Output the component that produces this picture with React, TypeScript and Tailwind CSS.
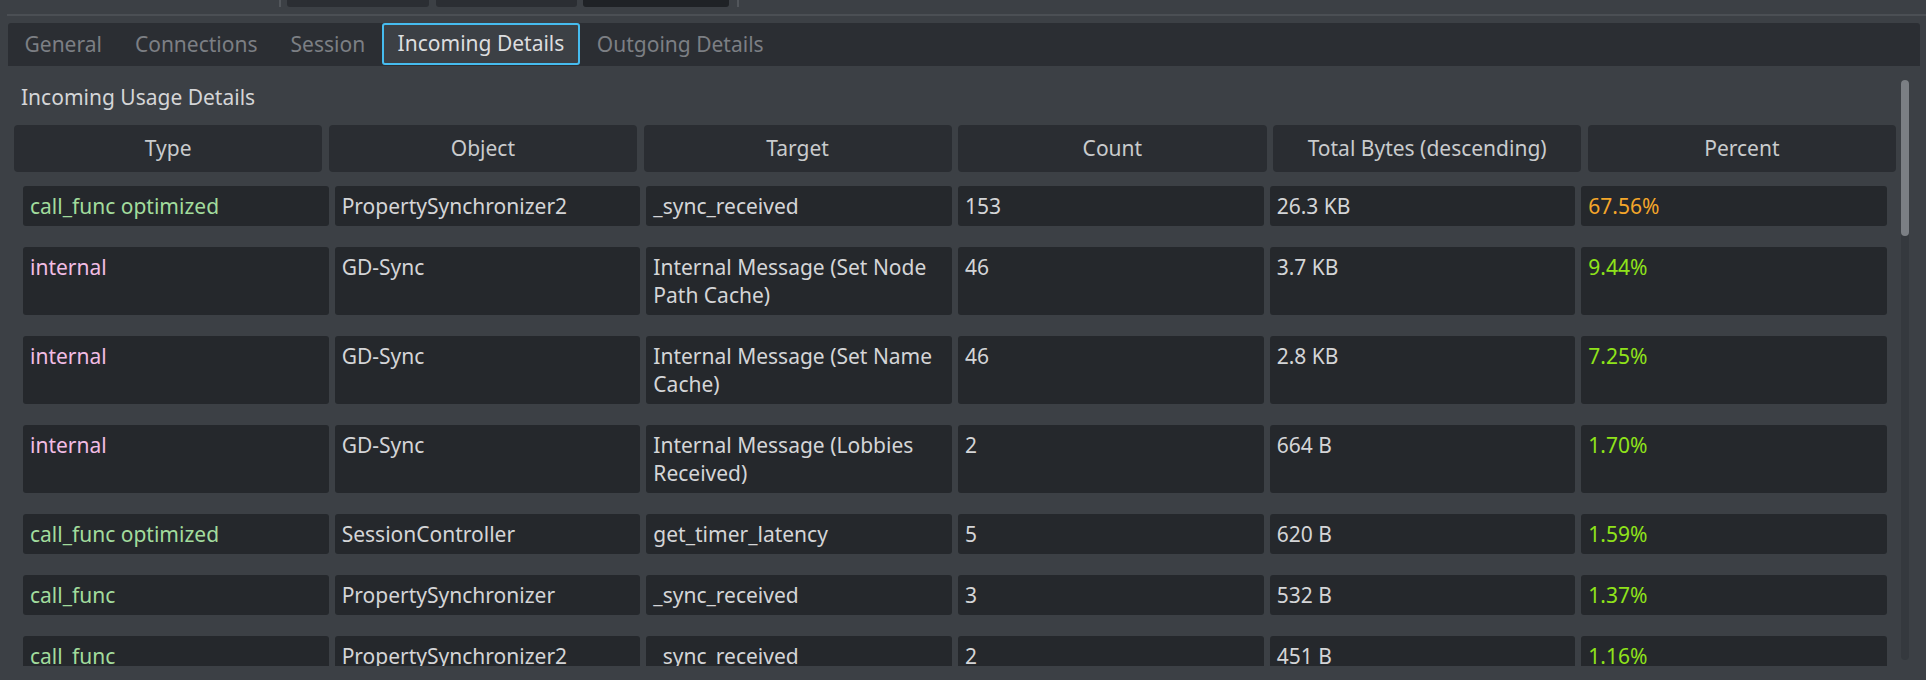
import React from "react";

type Row = {
  type: string;
  kind: "call" | "internal";
  object: string;
  target: string[];
  count: string;
  bytes: string;
  percent: string;
  hot?: boolean;
};

const ROWS: Row[] = [
  { type: "call_func optimized", kind: "call", object: "PropertySynchronizer2", target: ["_sync_received"], count: "153", bytes: "26.3 KB", percent: "67.56%", hot: true },
  { type: "internal", kind: "internal", object: "GD-Sync", target: ["Internal Message (Set Node", "Path Cache)"], count: "46", bytes: "3.7 KB", percent: "9.44%" },
  { type: "internal", kind: "internal", object: "GD-Sync", target: ["Internal Message (Set Name", "Cache)"], count: "46", bytes: "2.8 KB", percent: "7.25%" },
  { type: "internal", kind: "internal", object: "GD-Sync", target: ["Internal Message (Lobbies", "Received)"], count: "2", bytes: "664 B", percent: "1.70%" },
  { type: "call_func optimized", kind: "call", object: "SessionController", target: ["get_timer_latency"], count: "5", bytes: "620 B", percent: "1.59%" },
  { type: "call_func", kind: "call", object: "PropertySynchronizer", target: ["_sync_received"], count: "3", bytes: "532 B", percent: "1.37%" },
  { type: "call_func", kind: "call", object: "PropertySynchronizer2", target: ["_sync_received"], count: "2", bytes: "451 B", percent: "1.16%" },
];

const TABS = ["General", "Connections", "Session", "Incoming Details", "Outgoing Details"];
const HEADERS = ["Type", "Object", "Target", "Count", "Total Bytes (descending)", "Percent"];

function Cell({ children, className = "" }: { children: React.ReactNode; className?: string }) {
  return (
    <div className={`bg-[#25282c] rounded-[3px] px-[7px] py-[6px] leading-[28px] text-[#d4d5d7] ${className}`}>
      {children}
    </div>
  );
}

export default function App() {
  return (
    <div className="w-[1926px] h-[680px] overflow-hidden bg-[#3c4045] font-['Noto_Sans',sans-serif] text-[21px]">
      {/* cut-off toolbar above */}
      <div className="flex h-[7px] items-stretch">
        <div className="ml-[279px] w-[2px] bg-[#52565b]" />
        <div className="ml-[6px] w-[142px] bg-[#2b2e33] rounded-b-[3px]" />
        <div className="ml-[7px] w-[141px] bg-[#2b2e33] rounded-b-[3px]" />
        <div className="ml-[6px] w-[146px] bg-[#1f2226] rounded-b-[3px]" />
        <div className="ml-[8px] w-[2px] bg-[#52565b]" />
      </div>
      <div className="mt-[7px] ml-[7px] h-[2px] bg-[#4b4f54]" />

      {/* tab bar */}
      <div className="mt-[7px] ml-[8px] mr-[6px] h-[43px] bg-[#2b2e33] rounded-t-[3px] flex">
        {TABS.map((t) =>
          t === "Incoming Details" ? (
            <div
              key={t}
              className="h-[42px] px-[14px] flex items-center border-2 border-[#46bcef] rounded-[3px] bg-[#3c4045] text-[#dcdddf] whitespace-nowrap"
            >
              {t}
            </div>
          ) : (
            <div key={t} className="h-full px-[16.5px] flex items-center text-[#7c7f84] whitespace-nowrap">
              {t}
            </div>
          )
        )}
      </div>

      {/* scroll area */}
      <div className="flex h-[600px] overflow-hidden">
        <div className="w-[1901px] shrink-0">
          <div className="pt-[17px] pl-[21px] leading-[28px] text-[#d4d5d7]">Incoming Usage Details</div>

          <div className="mt-[14px] ml-[14px] w-[1882px] grid grid-cols-6 gap-x-[6.5px]">
            {HEADERS.map((h) => (
              <div
                key={h}
                className="h-[47px] bg-[#2a2d32] rounded-[4px] flex items-center justify-center text-[#c9cbcd] whitespace-nowrap"
              >
                {h}
              </div>
            ))}
          </div>

          <div className="mt-[14px] ml-[23px] w-[1864px] grid grid-cols-6 gap-x-[6px] gap-y-[21px]">
            {ROWS.map((r, i) => (
              <React.Fragment key={i}>
                <Cell className={r.kind === "call" ? "!text-[#a2dc9d]" : "!text-[#f2bde4]"}>{r.type}</Cell>
                <Cell>{r.object}</Cell>
                <Cell>
                  {r.target.map((line, j) => (
                    <div key={j}>{line}</div>
                  ))}
                </Cell>
                <Cell>{r.count}</Cell>
                <Cell>{r.bytes}</Cell>
                <Cell className={r.hot ? "!text-[#f4a62a]" : "!text-[#8fe31a]"}>{r.percent}</Cell>
              </React.Fragment>
            ))}
          </div>
        </div>

        {/* scrollbar */}
        <div className="mt-[14px] h-[580px] w-[8px] rounded-full bg-[#35393e] flex flex-col">
          <div className="h-[156px] w-[8px] rounded-full bg-[#7b7f84]" />
        </div>
      </div>
    </div>
  );
}
